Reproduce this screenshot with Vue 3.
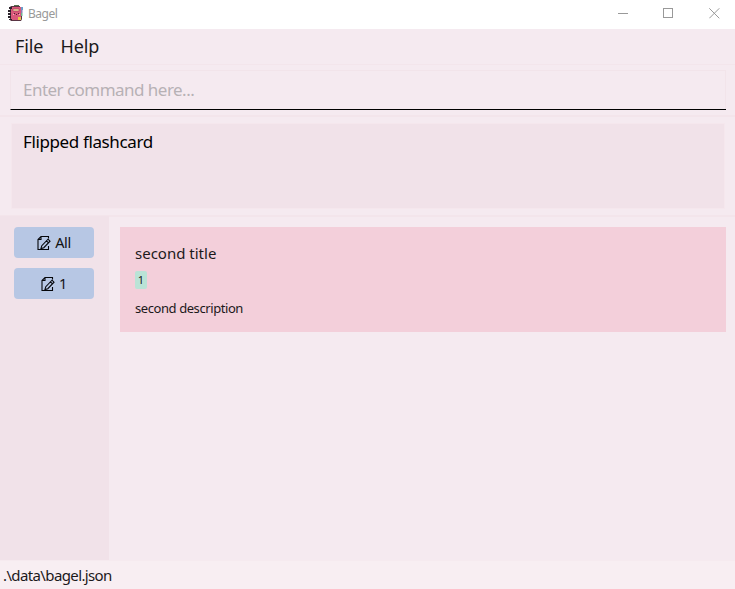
<script setup>
import { ref } from 'vue'

const menus = ['File', 'Help']
const command = ref('')
const result = 'Flipped flashcard'
const tags = ['All', '1']
const cards = [{ title: 'second title', tag: '1', description: 'second description' }]
</script>

<template>
  <div class="window">
    <header class="titlebar">
      <svg class="logo" width="16" height="16" viewBox="0 0 16 16">
        <path d="M3 1h9v1h2v12l-1 2H3l-1-1V2z" fill="#5a3544" />
        <path d="M13 2h2v3h-2z" fill="#6a9cc8" />
        <path d="M13 5h1.500v3H13z" fill="#8d7fb0" />
        <path d="M13 8h1.500v3H13z" fill="#6db78d" />
        <path d="M3 2h10v13H3z" fill="#d9587a" />
        <path d="M6 0h5v1H6z" fill="#55734e" />
        <path d="M5 4h6v2H5z" fill="#f5dda2" stroke="#8e3450" stroke-width=".5" />
        <path d="M1 2h3v2H1zM0 5h3v2H0zM0 8h3v2H0zM0 11h3v2H0zM1 14h3v1H1z" fill="#2b242b" />
        <path d="M6 8h1v1H6zM10 8h1v1h-1zM8 9h1v1H8z" fill="#512035" />
        <path d="M5 9h1v1H5zM11 9h1v1h-1z" fill="#f7b3c2" />
        <path d="M10 12h3v3h-3z" fill="#eac44b" />
      </svg>
      <span class="app-name">Bagel</span>
      <div class="controls">
        <svg width="11" height="11" viewBox="0 0 11 11" shape-rendering="crispEdges"><path d="M0 5.5h10" /></svg>
        <svg width="11" height="11" viewBox="0 0 11 11" shape-rendering="crispEdges"><path d="M.5.5h9v9h-9z" /></svg>
        <svg width="11" height="11" viewBox="0 0 11 11"><path d="M.3.3l10 10M10.3.3l-10 10" /></svg>
      </div>
    </header>
    <nav class="menubar">
      <span v-for="m in menus" :key="m">{{ m }}</span>
    </nav>
    <section class="command">
      <input v-model="command" placeholder="Enter command here..." />
    </section>
    <section class="result"><div class="result-box"><span>{{ result }}</span></div></section>
    <main class="content">
      <aside class="sidebar">
        <button v-for="t in tags" :key="t">
          <svg width="14" height="16" viewBox="0 0 14 16" fill="none" stroke="#05060a" stroke-width="1.1">
            <path d="M11.500 3.500V1.500H4L1 4.500v10h10.500V11M4 1.500v3H1" />
            <path d="M11 4.200l2 2-6.200 6.500-2.900.9.900-2.900zM9.500 5.800l2 2" />
          </svg>
          <span>{{ t }}</span>
        </button>
      </aside>
      <div class="cards">
        <article v-for="c in cards" :key="c.title" class="card">
          <h2>{{ c.title }}</h2>
          <span class="tag">{{ c.tag }}</span>
          <p>{{ c.description }}</p>
        </article>
      </div>
    </main>
    <footer class="status"><span>.\data\bagel.json</span></footer>
  </div>
</template>

<style>
body { margin: 0; overflow: hidden; }
</style>

<style scoped>
* { box-sizing: border-box; }
.window {
  width: 735px;
  height: 589px;
  display: flex;
  flex-direction: column;
  background: #f5eaf0;
  color: #1c191b;
  font-family: "Noto Sans", "Open Sans", sans-serif;
}
.titlebar {
  flex: 0 0 29px;
  display: flex;
  align-items: center;
  padding: 0 15px 3px 8px;
  background: #fff;
}
.app-name { margin-left: 4px; font-size: 12px; line-height: 16px; letter-spacing: -0.5px; color: #999; padding-top: 2px; }
.controls { margin-left: auto; display: flex; }
.controls svg { fill: none; stroke: #999; stroke-width: 1; margin-left: 34px; }
.controls svg:last-child { margin-left: 35px; }
.menubar {
  flex: 0 0 36px;
  display: flex;
  gap: 17px;
  padding: 5px 15px 0;
  border-bottom: 1px solid #f3e5eb;
  font-size: 18px;
  line-height: 25px;
  letter-spacing: -0.1px;
}
.command {
  flex: 0 0 52px;
  padding: 5px 9px 0 10px;
  border-bottom: 2px solid #f3e5eb;
}
.command input {
  display: block;
  width: 100%;
  height: 40px;
  padding: 0 12px 2px;
  border: 1px solid #f2e4ea;
  border-width: 1px 0 1px 1px;
  border-bottom-color: #000;
  box-shadow: inset -1px 0 #f2e4ea;
  border-radius: 0;
  outline: none;
  background: transparent;
  font: 17px "Noto Sans", sans-serif;
  letter-spacing: -0.53px;
}
.command input::placeholder { color: #b7b1b5; opacity: 1; }
.result {
  flex: 0 0 99px;
  padding: 6px 10px 6px 11px;
  border-bottom: 2px solid #f3e5eb;
}
.result-box {
  height: 86px;
  padding: 7px 11px;
  border: 1px solid #f5e7ed;
  background: #f1e2e9;
  color: #000;
  font-size: 17px;
  line-height: 22px;
  letter-spacing: -0.38px;
}
.content { flex: 1; display: flex; min-height: 0; }
.sidebar {
  flex: 0 0 109px;
  display: flex;
  flex-direction: column;
  gap: 10px;
  padding: 11px 15px 0 14px;
  margin-top: -1px;
  background: #f1e2e9;
}
.sidebar button {
  height: 31px;
  display: flex;
  align-items: center;
  justify-content: center;
  gap: 4px;
  padding: 0;
  border: 0;
  border-radius: 4px;
  background: #b7c7e4;
  color: #111;
  font: 14.5px "Noto Sans", sans-serif;
  letter-spacing: -0.35px;
}
.sidebar button span { padding-bottom: 2px; }
.cards { flex: 1; padding: 10px 9px 0 11px; }
.card {
  height: 105px;
  display: flex;
  flex-direction: column;
  align-items: flex-start;
  padding: 16px 15px 0;
  background: #f3cfda;
}
.card h2 { margin: 0; font-size: 15px; line-height: 21px; font-weight: 400; }
.tag {
  width: 12px;
  height: 18px;
  margin-top: 7px;
  border-radius: 2px;
  background: #bae3d6;
  font-size: 11px;
  line-height: 18px;
  text-align: center;
}
.card p { margin: 10px 0 0; font-size: 13px; line-height: 18px; letter-spacing: -0.42px; }
.status {
  flex: 0 0 29px;
  padding: 4px 3px 0;
  border-top: 1px solid #f6eaef;
  background: #f8eef2;
  font-size: 15px;
  line-height: 20px;
  letter-spacing: -0.62px;
}
</style>
